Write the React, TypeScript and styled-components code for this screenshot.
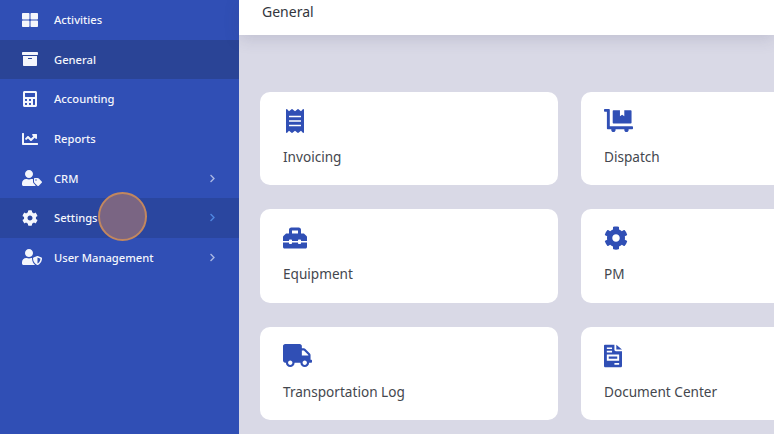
import React from "react";
import styled, { createGlobalStyle } from "styled-components";
import {
  FaThLarge, FaArchive, FaCalculator, FaChartLine, FaUserTag, FaCog, FaUserShield,
  FaReceipt, FaDollyFlatbed, FaToolbox, FaTruck, FaChevronRight,
} from "react-icons/fa";

const Global = createGlobalStyle`
  html, body { margin: 0; padding: 0; height: 100%; overflow: hidden; }
  body { font-family: "Noto Sans", "Open Sans", sans-serif; }
  * { box-sizing: border-box; }
`;

const Shell = styled.div`
  position: relative;
  display: flex;
  width: 774px;
  height: 434px;
  overflow: hidden;
  background: #d9d9e6;
`;

const Sidebar = styled.nav`
  flex: 0 0 239px;
  display: flex;
  flex-direction: column;
  background: #304fb5;
`;

const NavRow = styled.div<{ $tone?: "active" | "hover" }>`
  height: 39.6px;
  display: flex;
  align-items: center;
  padding: 0 22px;
  color: #f4f6fc;
  font-size: 11.2px;
  font-weight: 500;
  background: ${(p) =>
    p.$tone === "active" ? "#2a4496" : p.$tone === "hover" ? "#2a469f" : "transparent"};
`;

const NavIcon = styled.span<{ $wide?: boolean }>`
  flex: 0 0 32px;
  display: flex;
  align-items: center;
  font-size: ${(p) => (p.$wide ? "20px" : "16px")};
`;

const NavLabel = styled.span`
  flex: 1;
`;

const Chevron = styled.span<{ $hover?: boolean }>`
  display: flex;
  font-size: 9px;
  color: ${(p) => (p.$hover ? "#4f86e0" : "#a9b7e3")};
`;

const Main = styled.main`
  flex: 1;
  min-width: 0;
  display: flex;
  flex-direction: column;
`;

const Header = styled.header`
  flex: 0 0 35px;
  display: flex;
  align-items: flex-start;
  padding: 3px 23px 0;
  background: #fff;
  color: #33363d;
  font-size: 14px;
  line-height: 18px;
  box-shadow: 0 4px 16px rgba(60, 60, 100, 0.16);
`;

const CardGrid = styled.section`
  display: grid;
  grid-template-columns: 298px 298px;
  grid-auto-rows: 93.5px;
  column-gap: 23px;
  row-gap: 24px;
  padding: 56.7px 0 0 20.5px;
`;

const Card = styled.article`
  display: flex;
  flex-direction: column;
  padding: 17px 23.5px 0;
  background: #fff;
  border-radius: 10px;
  color: #44474e;
  font-size: 13.6px;
`;

const CardIcon = styled.span`
  height: 24px;
  display: flex;
  align-items: center;
  margin-bottom: 14px;
  color: #304fb5;
  font-size: 24px;
`;

const Spot = styled.div`
  position: absolute;
  left: 98px;
  top: 192px;
  width: 49px;
  height: 49px;
  border-radius: 50%;
  border: 2px solid #c2875f;
  background: #7a6583;
`;

const DocIcon = () => (
  <svg width="18" height="24" viewBox="0 0 19 24" fill="currentColor">
    <path
      fillRule="evenodd"
      d="M1 0h10v5.500c0 .8.7 1.500 1.500 1.500H19v15.500c0 .8-.7 1.500-1.500 1.500H1.500C.7 24 0 23.300 0 22.500V1C0 .4.400 0 1 0zM3 3v1.700h5.500V3H3zm0 3.500v1.700h5.500V6.500H3zM3 10.500v6.500h13v-6.500H3zm2 2h9v2.500H5v-2.500zM11 19.500v1.700h5v-1.700h-5z"
    />
    <path d="M13 0l6 5.200h-6z" />
  </svg>
);

const navItems = [
  { label: "Activities", icon: <FaThLarge /> },
  { label: "General", icon: <FaArchive />, tone: "active" as const },
  { label: "Accounting", icon: <FaCalculator /> },
  { label: "Reports", icon: <FaChartLine /> },
  { label: "CRM", icon: <FaUserTag />, chevron: true, wide: true },
  { label: "Settings", icon: <FaCog />, chevron: true, tone: "hover" as const },
  { label: "User Management", icon: <FaUserShield />, chevron: true, wide: true },
];

const cards = [
  { label: "Invoicing", icon: <FaReceipt /> },
  { label: "Dispatch", icon: <FaDollyFlatbed style={{ fontSize: 29 }} /> },
  { label: "Equipment", icon: <FaToolbox /> },
  { label: "PM", icon: <FaCog /> },
  { label: "Transportation Log", icon: <FaTruck style={{ fontSize: 29 }} /> },
  { label: "Document Center", icon: <DocIcon /> },
];

export default function App() {
  return (
    <Shell>
      <Global />
      <Sidebar>
        {navItems.map((n) => (
          <NavRow key={n.label} $tone={n.tone}>
            <NavIcon $wide={n.wide}>{n.icon}</NavIcon>
            <NavLabel>{n.label}</NavLabel>
            {n.chevron && (
              <Chevron $hover={n.tone === "hover"}>
                <FaChevronRight />
              </Chevron>
            )}
          </NavRow>
        ))}
      </Sidebar>
      <Main>
        <Header>General</Header>
        <CardGrid>
          {cards.map((c) => (
            <Card key={c.label}>
              <CardIcon>{c.icon}</CardIcon>
              {c.label}
            </Card>
          ))}
        </CardGrid>
      </Main>
      <Spot />
    </Shell>
  );
}
